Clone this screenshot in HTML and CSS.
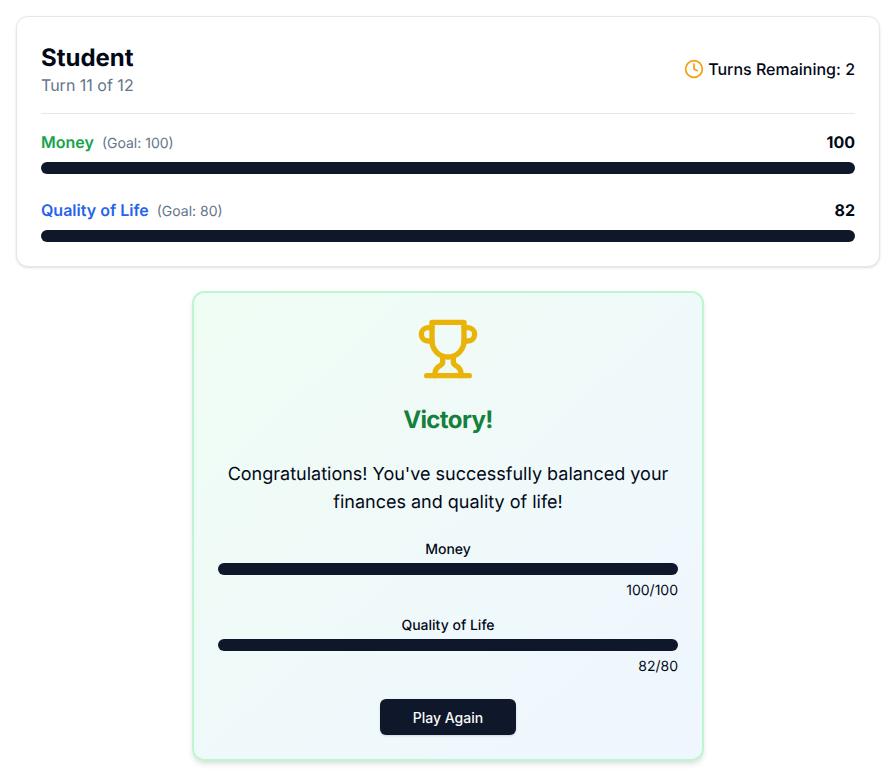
FILE: index.html
```html
<!DOCTYPE html>
<html lang="en">
<head>
    <meta charset="UTF-8">
    <meta name="viewport" content="width=device-width, initial-scale=1.0">
    <title>Student - Victory</title>
    <link rel="stylesheet" href="styles.css">
</head>
<body>
    <div class="status-card">
        <div class="status-header">
            <div>
                <h2 class="role-title">Student</h2>
                <p class="turn-text">Turn 11 of 12</p>
            </div>
            <div class="turns-left">
                <svg class="clock-icon" viewBox="0 0 24 24" fill="none" stroke="currentColor" stroke-width="2" stroke-linecap="round" stroke-linejoin="round">
                    <circle cx="12" cy="12" r="10"></circle>
                    <polyline points="12 6 12 12 16 14"></polyline>
                </svg>
                <span>Turns Remaining: 2</span>
            </div>
        </div>
        <div class="stat">
            <div class="stat-row">
                <div class="stat-title">
                    <span class="stat-name money">Money</span>
                    <span class="stat-goal">(Goal: 100)</span>
                </div>
                <span class="stat-value">100</span>
            </div>
            <div class="bar"></div>
        </div>
        <div class="stat">
            <div class="stat-row">
                <div class="stat-title">
                    <span class="stat-name life">Quality of Life</span>
                    <span class="stat-goal">(Goal: 80)</span>
                </div>
                <span class="stat-value">82</span>
            </div>
            <div class="bar"></div>
        </div>
    </div>

    <div class="result-card">
        <svg class="trophy-icon" viewBox="0 0 24 24" fill="none" stroke="currentColor" stroke-width="2" stroke-linecap="round" stroke-linejoin="round">
            <path d="M6 9H4.5a2.5 2.5 0 0 1 0-5H6"></path>
            <path d="M18 9h1.5a2.5 2.5 0 0 0 0-5H18"></path>
            <path d="M4 22h16"></path>
            <path d="M10 14.66V17c0 .55-.47.98-.97 1.21C7.85 18.75 7 20.24 7 22"></path>
            <path d="M14 14.66V17c0 .55.47.98.97 1.21C16.15 18.75 17 20.24 17 22"></path>
            <path d="M18 2H6v7a6 6 0 0 0 12 0V2Z"></path>
        </svg>
        <h2 class="result-title">Victory!</h2>
        <p class="result-text">Congratulations! You've successfully balanced your finances and quality of life!</p>
        <div class="result-stats">
            <div class="result-stat">
                <div class="result-label">Money</div>
                <div class="bar"></div>
                <div class="result-score">100/100</div>
            </div>
            <div class="result-stat">
                <div class="result-label">Quality of Life</div>
                <div class="bar"></div>
                <div class="result-score">82/80</div>
            </div>
        </div>
        <button class="play-button">Play Again</button>
    </div>
</body>
</html>
```

FILE: styles.css
```css
* {
    box-sizing: border-box;
}
body {
    margin: 0;
    padding: 16px;
    background-color: #ffffff;
    color: #020817;
    font-family: "Inter", "Liberation Sans", sans-serif;
    font-optical-sizing: none;
    text-rendering: geometricPrecision;
}
h2, p {
    margin: 0;
}
.status-card {
    padding: 24px;
    background-color: #ffffff;
    border: 1px solid #e2e8f0;
    border-radius: 12px;
    box-shadow: 0 1px 3px rgba(0, 0, 0, 0.1), 0 1px 2px -1px rgba(0, 0, 0, 0.1);
}
.status-header {
    display: flex;
    justify-content: space-between;
    align-items: center;
    padding-bottom: 16px;
    margin-bottom: 16px;
    border-bottom: 1px solid #e2e8f0;
}
.role-title {
    padding-top: 1px;
    margin-bottom: -1px;
    font-size: 24px;
    line-height: 32px;
    font-weight: 700;
}
.turn-text {
    font-size: 16px;
    line-height: 24px;
    color: #64748b;
}
.turns-left {
    display: flex;
    align-items: center;
    gap: 4px;
    font-size: 16px;
    line-height: 24px;
    font-weight: 500;
}
.clock-icon {
    width: 20px;
    height: 20px;
    color: #f59e0b;
}
.stat {
    margin-bottom: 24px;
}
.stat:last-child {
    margin-bottom: 0;
}
.stat-row {
    display: flex;
    justify-content: space-between;
    align-items: center;
    height: 24px;
    margin-bottom: 8px;
}
.stat-title {
    display: flex;
    align-items: baseline;
    gap: 8px;
}
.stat-name {
    font-size: 16px;
    font-weight: 600;
}
.money {
    color: #16a34a;
}
.life {
    color: #2563eb;
}
.stat-goal {
    font-size: 14px;
    color: #64748b;
}
.stat-value {
    font-size: 16px;
    font-weight: 700;
}
.bar {
    height: 12px;
    background-color: #0f172a;
    border-radius: 9999px;
}
.result-card {
    display: flex;
    flex-direction: column;
    align-items: center;
    width: 512px;
    margin: 24px auto 0;
    padding: 24px;
    background: linear-gradient(to bottom right, #f0fdf4, #eff6ff);
    border: 2px solid #bbf7d0;
    border-radius: 12px;
    box-shadow: 0 4px 6px -1px rgba(0, 0, 0, 0.1), 0 2px 4px -2px rgba(0, 0, 0, 0.1);
}
.trophy-icon {
    width: 64px;
    height: 64px;
    color: #eab308;
}
.result-title {
    margin-top: 23px;
    font-size: 24px;
    line-height: 32px;
    font-weight: 700;
    letter-spacing: -0.025em;
    color: #15803d;
}
.result-text {
    margin-top: 25px;
    font-size: 18px;
    line-height: 28px;
    text-align: center;
}
.result-stats {
    width: 100%;
    margin-top: 23px;
}
.result-stat {
    margin-bottom: 15px;
}
.result-stat:last-child {
    margin-bottom: 0;
}
.result-label {
    margin-bottom: 3px;
    font-size: 14px;
    line-height: 20px;
    font-weight: 500;
    text-align: center;
}
.result-score {
    margin-top: 6px;
    font-size: 14px;
    line-height: 20px;
    text-align: right;
}
.play-button {
    width: 136px;
    height: 36px;
    margin-top: 22px;
    background-color: #0f172a;
    color: #f8fafc;
    border: none;
    border-radius: 6px;
    font-family: inherit;
    font-size: 14px;
    font-weight: 500;
    box-shadow: 0 1px 3px rgba(0, 0, 0, 0.1), 0 1px 2px -1px rgba(0, 0, 0, 0.1);
    cursor: pointer;
}
```
